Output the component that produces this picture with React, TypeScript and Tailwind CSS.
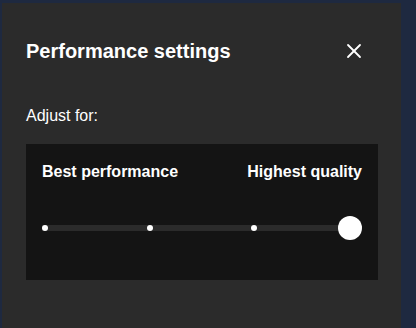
import { X } from 'lucide-react'

const stops = [0, 105, 209]

export default function App() {
  return (
    <div className="min-h-screen bg-[#1e2940] pl-[2px] pt-[3px] font-['Liberation_Sans',Arial,sans-serif] text-white">
      <div className="h-[325px] w-[399px] bg-[#2b2b2b] pl-6 pr-[23px] pt-[34px]">
        <div className="flex h-7 items-center justify-between">
          <h1 className="text-[20px] font-bold leading-7">Performance settings</h1>
          <button type="button" className="mr-3 grid h-6 w-6 place-items-center text-white" aria-label="Close">
            <X size={24} strokeWidth={1.8} aria-hidden="true" />
          </button>
        </div>

        <p className="mt-[39px] text-[16px] leading-6">Adjust for:</p>

        <div className="mt-4 bg-[#141414] px-4 pb-10 pt-4">
          <div className="flex items-center justify-between text-[16px] font-bold leading-6">
            <span>Best performance</span>
            <span>Highest quality</span>
          </div>

          <div className="relative mt-8 h-6">
            <div className="absolute left-0 right-3 top-[9px] h-[6px] bg-[#2b2b2b]" />
            {stops.map((left) => (
              <span
                key={left}
                className="absolute top-[9px] h-[6px] w-[6px] rounded-full bg-white"
                style={{ left }}
              />
            ))}
            <span className="absolute right-0 top-0 h-6 w-6 rounded-full bg-white" />
          </div>
        </div>
      </div>
    </div>
  )
}
